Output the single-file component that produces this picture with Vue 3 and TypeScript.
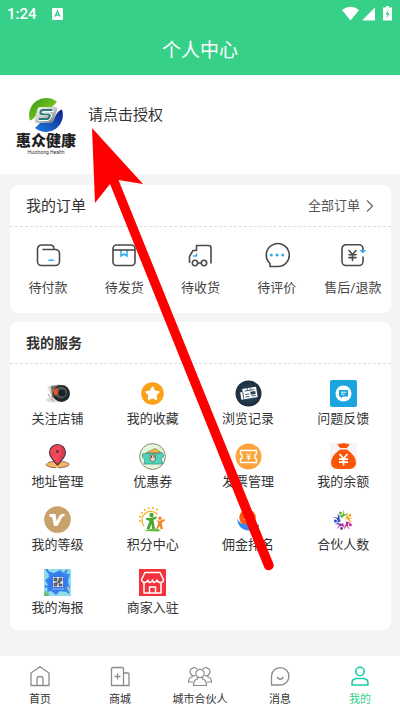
<script setup lang="ts">
interface Entry {
  icon: string
  label: string
}

const orders: Entry[] = [
  { icon: 'wallet', label: '待付款' },
  { icon: 'parcel', label: '待发货' },
  { icon: 'truck', label: '待收货' },
  { icon: 'comment', label: '待评价' },
  { icon: 'refund', label: '售后/退款' },
]

const services: Entry[] = [
  { icon: 'lens', label: '关注店铺' },
  { icon: 'star', label: '我的收藏' },
  { icon: 'news', label: '浏览记录' },
  { icon: 'feedback', label: '问题反馈' },
  { icon: 'pin', label: '地址管理' },
  { icon: 'coupon', label: '优惠券' },
  { icon: 'invoice', label: '发票管理' },
  { icon: 'moneybag', label: '我的余额' },
  { icon: 'level', label: '我的等级' },
  { icon: 'family', label: '积分中心' },
  { icon: 'commission', label: '佣金排名' },
  { icon: 'partners', label: '合伙人数' },
  { icon: 'poster', label: '我的海报' },
  { icon: 'shop', label: '商家入驻' },
]

const tabs: Entry[] = [
  { icon: 'home', label: '首页' },
  { icon: 'mall', label: '商城' },
  { icon: 'group', label: '城市合伙人' },
  { icon: 'message', label: '消息' },
  { icon: 'me', label: '我的' },
]
const activeTab = 'me'
const partnerColors = ['#5cb531', '#f4a81d', '#c9259b', '#8a2fa8', '#2748c8']
const sunRays = [-100, -78, -56, -34, -12, 10, 32]
</script>

<template>
  <div class="page">
    <svg class="sprite" aria-hidden="true">
      <defs>
        <linearGradient id="g-green" x1="0" y1="0" x2="1" y2="1">
          <stop offset="0" stop-color="#2f9a1c" /><stop offset="1" stop-color="#a6d81c" />
        </linearGradient>
        <linearGradient id="g-blue" x1="0" y1="1" x2="1" y2="0">
          <stop offset="0" stop-color="#1d7fe0" /><stop offset="1" stop-color="#12208c" />
        </linearGradient>
        <linearGradient id="g-silver" x1="0" y1="0" x2="1" y2="1">
          <stop offset="0" stop-color="#fff" /><stop offset=".5" stop-color="#c3c8ca" /><stop offset="1" stop-color="#666c70" />
        </linearGradient>
        <radialGradient id="g-navy">
          <stop offset="0" stop-color="#35536a" /><stop offset="1" stop-color="#1b2b3c" />
        </radialGradient>
        <radialGradient id="g-poster">
          <stop offset="0" stop-color="#2b5fe4" /><stop offset="1" stop-color="#3b8af2" />
        </radialGradient>
      </defs>

      <symbol id="logo" viewBox="0 0 36 36">
        <path d="M2 23.500A17 17 0 0 1 29 5L22 12Q12 9 9 16T2 23.500Z" fill="url(#g-green)" />
        <path d="M34 12.500A17 17 0 0 1 7 31L14 24Q24 27 27 20T34 12.500Z" fill="url(#g-blue)" />
        <path d="M12 10H28Q30 10 29 13L26 23Q25 26 21 26H9Q6 26 7 23L9 14Q10 10 12 10Z" fill="url(#g-silver)" />
        <path d="M24 13H15Q13 13 12.500 15T14 17H20Q22 17 21.500 19.500T19 22H11" fill="none" stroke="#2a7a75" stroke-width="2" />
        <path d="M25.500 14.500H16L15 16H21Q24 16 23.500 19T20 23.500H11" fill="none" stroke="#fff" stroke-width="1" />
      </symbol>

      <symbol id="wallet" viewBox="0 0 26 26">
        <g fill="none" stroke="#4a4a4a" stroke-width="1.600" stroke-linecap="round">
          <path d="M8 7.500H20.500A4 4 0 0 1 24.500 11.500V19.500A4 4 0 0 1 20.500 23.500H6.500A4 4 0 0 1 2.500 19.500V7A4 4 0 0 1 6.500 3H15.500Q18.500 3 19 6.500" />
          <path d="M14 18.300H18.500" stroke="#35adf3" />
        </g>
      </symbol>
      <symbol id="parcel" viewBox="0 0 26 26">
        <path d="M10 8V14L13 12L16 14V8" fill="none" stroke="#35adf3" stroke-width="1.600" />
        <rect x="2" y="3" width="22" height="20.500" rx="3.500" fill="none" stroke="#4a4a4a" stroke-width="1.600" />
        <path d="M2 8H24" stroke="#4a4a4a" stroke-width="1.600" />
      </symbol>
      <symbol id="truck" viewBox="0 0 26 26">
        <g fill="none" stroke="#4a4a4a" stroke-width="1.600" stroke-linejoin="round">
          <path d="M2.500 21V14.500L6 8.500H9.500V3.500H21.500Q24 3.500 24 6V21.500M11 21H14" />
          <circle cx="8" cy="21" r="2.700" /><circle cx="17" cy="21" r="2.700" />
          <path d="M6 14H9.500V11.500" stroke="#35adf3" />
        </g>
      </symbol>
      <symbol id="comment" viewBox="0 0 26 26">
        <path d="M13 24.500H6V21.500A11.500 11.500 0 1 1 13 24.500Z" fill="none" stroke="#4a4a4a" stroke-width="1.600" stroke-linejoin="round" />
        <g fill="#2caaf5"><circle cx="7.300" cy="13" r="1.500" /><circle cx="13" cy="13" r="1.500" /><circle cx="18.700" cy="13" r="1.500" /></g>
      </symbol>
      <symbol id="refund" viewBox="0 0 26 26">
        <g fill="none" stroke="#4a4a4a" stroke-width="1.600" stroke-linecap="round">
          <path d="M23 8V6.500A4 4 0 0 0 19 2.700H6A4 4 0 0 0 2 6.700V19.500A4 4 0 0 0 6 23.500H19A4 4 0 0 0 23 19.500V15" />
          <path d="M9 8.500L12.500 12.500L16 8.500M12.500 12.500V18.500M9 12.700H16M9 15.600H16" />
        </g>
        <path d="M19.500 8H26L22.800 11.500Z" fill="#2caaf5" />
      </symbol>

      <symbol id="lens" viewBox="0 0 27 27">
        <ellipse cx="10" cy="20" rx="8" ry="2.500" fill="#ddd" />
        <path d="M2 7L16 4L20 17L6 20Z" fill="#d5d0c9" />
        <path d="M3 7L7 19" stroke="#fff" stroke-width="2" />
        <path d="M7 6L16 5L13 20L8 17Z" fill="#777069" />
        <circle cx="17.500" cy="13.500" r="8.500" fill="#20272b" />
        <circle cx="17" cy="12.500" r="6" fill="#4e565a" />
        <circle cx="18" cy="13" r="3.500" fill="#172226" />
        <path d="M9 10L13.500 7.500L14 14L10.500 16Z" fill="#e2582b" />
        <path d="M10 21Q6 19 4 14" fill="none" stroke="#a69d92" />
      </symbol>
      <symbol id="star" viewBox="0 0 27 27">
        <circle cx="13.500" cy="13.500" r="11.300" fill="#f9a11b" />
        <path d="M13.500 7L15.700 11L20 11.800L17 15L17.500 19.500L13.500 17.600L9.500 19.500L10 15L7 11.800L11.300 11Z" fill="#fff" stroke="#fff" stroke-width="1.300" stroke-linejoin="round" />
      </symbol>
      <symbol id="news" viewBox="0 0 27 27">
        <circle cx="13.500" cy="13.500" r="13" fill="url(#g-navy)" />
        <g transform="rotate(-9 13.500 13.500)">
          <path d="M8 8H22V18.500H5.500V11H8Z" fill="#fff" />
          <path d="M8 11V18M10 10.500H20M10 16.500H14M10 14H14M16 16.500H20.500" stroke="#294052" stroke-width=".8" />
          <rect x="15.500" y="12" width="5" height="3" fill="#294052" />
          <path d="M13 8V10M16 8V10" stroke="#294052" stroke-width=".7" />
        </g>
      </symbol>
      <symbol id="feedback" viewBox="0 0 27 27">
        <rect width="27" height="27" rx="2" fill="#1ba5df" />
        <circle cx="13.500" cy="13.500" r="8" fill="#fff" />
        <path d="M9 10H18V16.500H13L10.800 18.500V16.500H9Z" fill="#1ba5df" />
        <path d="M11 12.200H16M11 14.200H14.500" stroke="#fff" stroke-width=".9" />
      </symbol>
      <symbol id="pin" viewBox="0 0 27 27">
        <ellipse cx="13.500" cy="21.500" rx="11.500" ry="3.300" fill="#f9b45e" stroke="#564247" stroke-width=".7" stroke-dasharray="12 2" />
        <path d="M13.500 22Q5.500 14 5.500 9.500A8 8 0 0 1 21.500 9.500Q21.500 14 13.500 22Z" fill="#f1475a" stroke="#423542" stroke-width="1.200" />
        <path d="M17 3.500A7 7 0 0 1 20.500 10Q20 14 14 20Q18 12 17 3.500Z" fill="#d93a50" />
        <circle cx="13.500" cy="8.500" r="1.500" fill="#493743" />
      </symbol>
      <symbol id="coupon" viewBox="0 0 27 27">
        <circle cx="13.500" cy="13.500" r="12.900" fill="#e2f7dc" stroke="#8c8870" stroke-width="1" />
        <path d="M7 10L16 5.500L22 9.500Z" fill="#f1bb45" stroke="#8b6e3e" stroke-width=".7" />
        <path d="M5.500 10.500H21.500L23 9.500L25 13L22 15.500L24 21H5L6 17L3.500 14V11Z" fill="#4cd5bf" stroke="#4b8f7c" stroke-width=".8" />
        <path d="M11 12H16.500V17L13.800 19L11 17Z" fill="#e7d7ba" stroke="#665b4c" stroke-width=".8" />
        <path d="M12.500 13V15M15 13V15" stroke="#564f48" />
      </symbol>
      <symbol id="invoice" viewBox="0 0 27 27">
        <circle cx="13.500" cy="13.500" r="13" fill="#fba53c" />
        <path d="M5.500 7.500H21.500V11A2.600 2.600 0 0 0 21.500 16V19.500H5.500V16A2.600 2.600 0 0 0 5.500 11Z" fill="none" stroke="#fff" stroke-width="1.400" stroke-linejoin="round" />
        <path d="M11.500 10.500L13.500 13L15.500 10.500M13.500 13V17M11.500 13.300H15.500M11.500 15.200H15.500" fill="none" stroke="#fff" />
      </symbol>
      <symbol id="moneybag" viewBox="0 0 27 27">
        <rect width="27" height="27" fill="#f7f4f7" />
        <path d="M8 1.500Q13.500 0 19 1.500L17 4.500H10Z" fill="#fb5508" stroke="#fb5508" stroke-linejoin="round" />
        <path d="M10 6.500H17Q26 13 26 19.500Q26 26 19 26H8Q1 26 1 19.500Q1 13 10 6.500Z" fill="#fb5508" />
        <path d="M9.500 11L13.500 15.500L17.500 11M13.500 15.500V22.500M9 16.200H18M9 19.200H18" fill="none" stroke="#fff" stroke-width="1.700" />
      </symbol>
      <symbol id="level" viewBox="0 0 27 27">
        <circle cx="13.500" cy="13.500" r="13.300" fill="#c8a16b" />
        <path d="M5.500 8H11.500L12.500 15L15 10.500Q16 8 18 8H21L20 10.500H18.500L13.500 20H10L8 11H5.500Z" fill="#fff" />
      </symbol>
      <symbol id="family" viewBox="0 0 27 27">
        <path d="M5 20A8.500 8.500 0 1 1 18.500 8.500" fill="none" stroke="#f6b02d" stroke-width="1.300" />
        <path v-for="a in sunRays" :key="a" d="M12 3V.8" :transform="`rotate(${a} 12 13)`" stroke="#f6b02d" stroke-width="1.500" />
        <circle cx="12.500" cy="9" r="2.200" fill="#47a72f" />
        <path d="M7 12L11 12L17.500 10.500L18 12L14.500 14L16 23H13.300L12.500 18L10.500 23H7.500L10.500 15L7 13.500Z" fill="#47a72f" />
        <circle cx="21" cy="12.300" r="1.700" fill="#f28424" />
        <path d="M17.500 13.500L20.500 15L25.500 13L26 14.500L22.500 17L24 23H21.500L20.800 20L18.500 23H17L19.500 17Z" fill="#f28424" />
        <path d="M5 25Q13 21 22 24L19 25.500Z" fill="#61bd36" />
      </symbol>
      <symbol id="commission" viewBox="0 0 27 27">
        <circle cx="12.500" cy="11.500" r="8.300" fill="#fb5c12" />
        <path d="M9.500 7L12.500 11L15.500 7M12.500 11V16M9.500 11H15.500M9.500 13.500H15.500" fill="none" stroke="#fff" stroke-width="1.200" />
        <path d="M2 12.500Q5 18 10 18L16 20L24 18.500V20.500Q19 25 12 24.500Q3 23 2 12.500Z" fill="#3489f5" />
      </symbol>
      <symbol id="partners" viewBox="0 0 27 27">
        <g v-for="(color, i) in partnerColors" :key="color" :transform="`rotate(${i * 72} 13.500 14.500)`" :fill="color">
          <circle cx="10.500" cy="7" r="1.500" />
          <path d="M13.500 3.500Q15.500 7.500 12 12.500Q11.500 10.500 8 9Q10.500 9.500 12 9Q14 7 13.500 3.500Z" />
          <path d="M13 8.500Q15.500 8.500 18.500 6.500Q16.500 10 12.500 10.800Z" />
        </g>
      </symbol>
      <symbol id="poster" viewBox="0 0 27 27">
        <rect width="27" height="27" fill="#91dcec" />
        <path d="M4 2L10 4L16 1L20 4L26 5L24 12L26 19L21 23L16 22L12 26L7 22L3 23L4 16L1 11L5 8Z" fill="url(#g-poster)" />
        <path d="M2 0L5 4M23 1L21 4M1 17L4 18M22 21L25 24" stroke="#3680e5" stroke-width="2" />
        <path d="M0 27L1 21L3 25L4 22L5 27Z" fill="#63b96a" /><circle cx="24" cy="19" r="1" fill="#f5dc45" />
        <rect x="9" y="8" width="10" height="10" fill="#eef3fa" />
        <path d="M10 9H13V12H10ZM15 9H18V12H15ZM10 14H13V17H10ZM14 12H16V14H14ZM15 15H18V17H15ZM13 13V15" fill="#777" stroke="#3c4352" stroke-width=".7" />
        <path d="M8 20H20" stroke="#a9cdfb" stroke-width=".8" />
      </symbol>
      <symbol id="shop" viewBox="0 0 27 27">
        <rect width="27" height="27" fill="#f2323d" />
        <g fill="none" stroke="#fff" stroke-width="1.500" stroke-linejoin="round">
          <path d="M6 3.500H21L24.500 10.500Q24.500 13.500 21.500 13.500T18 11Q17 13.500 15.500 13.500T13.500 11Q12.500 13.500 11 13.500T9 11Q8 13.500 5.500 13.500T2.500 10.500Z" />
          <path d="M5 14V24H22V14M10.500 24V18H16.500V24" />
        </g>
      </symbol>

      <symbol id="home" viewBox="0 0 24 24">
        <path d="M3 9L12 2.800L21 9V21.500H3ZM9 21.500V15Q9 12.500 12 12.500T15 15V21.500" fill="none" stroke="currentColor" stroke-width="1.300" stroke-linejoin="round" />
      </symbol>
      <symbol id="mall" viewBox="0 0 24 24">
        <path d="M5 3.500H14Q15.500 3.500 15.500 5V21.500H3.500V5Q3.500 3.500 5 3.500ZM15.500 9H20Q21 9 21 10V21.500H15.500M9.500 9.500V15.500M6.500 12.500H12.500" fill="none" stroke="currentColor" stroke-width="1.300" />
      </symbol>
      <symbol id="group" viewBox="0 0 24 24">
        <g fill="none" stroke="currentColor" stroke-width="1.200" stroke-linejoin="round">
          <path d="M7.500 11.500A4 4 0 1 1 9 5M16.500 11.500A4 4 0 1 0 15 5M5 11L4 13Q.5 14 .5 18H5M19 11L20 13Q23.500 14 23.500 18H19" />
          <circle cx="12" cy="9.500" r="4.200" />
          <path d="M9.500 13V15Q5.500 16 5.500 21.500H18.500Q18.500 16 14.500 15V13" />
        </g>
      </symbol>
      <symbol id="message" viewBox="0 0 24 24">
        <path d="M3.500 21V12.500A8.700 8.700 0 1 1 12.200 21ZM9 13Q12.200 17.500 15.500 13" fill="none" stroke="currentColor" stroke-width="1.300" stroke-linejoin="round" />
      </symbol>
      <symbol id="me" viewBox="0 0 24 24">
        <g fill="none" stroke="#1dcda6" stroke-width="1.600" stroke-linejoin="round">
          <circle cx="12" cy="7.500" r="4.200" />
          <path d="M4 21V19Q4 14.500 9 14.500H15Q20 14.500 20 19V21Z" />
        </g>
      </symbol>
    </svg>

    <header class="top">
      <div class="status">
        <span class="clock">1:24</span>
        <svg class="badge" viewBox="0 0 11 12">
          <rect width="11" height="12" rx="1" fill="#fff" />
          <path d="M3 8.500L5.500 3L8 8.500M4 7H7" fill="none" stroke="#37d089" stroke-width="1.300" />
        </svg>
        <svg class="signals" viewBox="0 0 51 16">
          <path d="M0 4Q8.500 -2.500 17 4L8.500 14.500Z" fill="#fff" />
          <path d="M33 1.500V14.500H20Z" fill="#fff" />
          <path d="M44 1.500V0H47V1.500H50V14.500H41V1.500Z" fill="#fff" />
          <path d="M46.500 3.500L43.500 8.500H45.500L44.500 12.500L47.800 7.300H45.800Z" fill="#37d089" />
        </svg>
      </div>
      <h1 class="title">个人中心</h1>
    </header>

    <section class="profile">
      <div class="brand">
        <svg class="brand-mark"><use href="#logo" /></svg>
        <span class="brand-name">惠众健康</span>
        <span class="brand-sub">Huizhong Health</span>
      </div>
      <button class="authorize" type="button">请点击授权</button>
    </section>

    <main class="content">
      <section class="card">
        <div class="card-head">
          <h2 class="orders-title">我的订单</h2>
          <a class="all" href="#orders">全部订单
            <svg class="chevron" viewBox="0 0 8 14"><path d="M1 1.500L6.500 7L1 12.500" fill="none" stroke="#666" stroke-width="1.200" /></svg>
          </a>
        </div>
        <nav class="orders">
          <a v-for="item in orders" :key="item.icon" class="order" href="#orders">
            <svg class="order-icon"><use :href="`#${item.icon}`" /></svg>
            <span>{{ item.label }}</span>
          </a>
        </nav>
      </section>

      <section class="card">
        <div class="card-head">
          <h2 class="services-title">我的服务</h2>
        </div>
        <nav class="services">
          <a v-for="item in services" :key="item.icon" class="service" href="#services">
            <svg class="service-icon"><use :href="`#${item.icon}`" /></svg>
            <span>{{ item.label }}</span>
          </a>
        </nav>
      </section>
    </main>

    <nav class="tabs">
      <a v-for="tab in tabs" :key="tab.icon" class="tab" :class="{ active: tab.icon === activeTab }" href="#tab">
        <svg class="tab-icon"><use :href="`#${tab.icon}`" /></svg>
        <span>{{ tab.label }}</span>
      </a>
    </nav>

    <svg class="pointer" viewBox="0 0 184 446" aria-hidden="true">
      <path d="M0 0L51 56L26.500 52L181.500 436A5 5 0 0 1 172.500 440L18 56L3 75Z" fill="#f00" />
    </svg>
  </div>
</template>

<style>
body {
  background: #f4f4f4;
}
</style>

<style scoped>
.page {
  position: relative;
  display: flex;
  flex-direction: column;
  min-height: 100vh;
  background: #f4f4f4;
  color: #333;
  font-family: Roboto, "Noto Sans CJK SC", sans-serif;
  font-size: 13px;
  line-height: 20px;
}
.sprite {
  position: absolute;
  width: 0;
  height: 0;
}
a {
  color: inherit;
  text-decoration: none;
}
h1,
h2 {
  margin: 0;
  font-weight: 400;
}
.top {
  background: #37d089;
  color: #fff;
  padding-bottom: 10px;
}
.status {
  display: flex;
  align-items: center;
  height: 28px;
  padding: 0 7px;
}
.clock {
  font-size: 15px;
  font-weight: 500;
}
.badge {
  width: 11px;
  height: 12px;
  margin-left: 15px;
}
.signals {
  width: 51px;
  height: 16px;
  margin-left: auto;
}
.title {
  margin-top: 9px;
  font-size: 19px;
  line-height: 28px;
  text-align: center;
}
.profile {
  display: flex;
  align-items: flex-start;
  gap: 12px;
  padding: 22px 16px 18px;
  background: #fff;
}
.brand {
  display: flex;
  flex-direction: column;
  align-items: center;
  width: 60px;
}
.brand-mark {
  width: 36px;
  height: 36px;
}
.brand-name {
  color: #222;
  font-size: 15px;
  font-weight: 900;
  line-height: 16px;
}
.brand-sub {
  font-size: 5px;
  line-height: 7px;
}
.authorize {
  margin: 8px 0;
  padding: 0;
  border: 0;
  background: none;
  color: #333;
  font: inherit;
  font-size: 15px;
}
.content {
  display: flex;
  flex-direction: column;
  gap: 9px;
  padding: 11px 9px 26px 10px;
}
.card {
  border-radius: 8px;
  background: #fff;
}
.card-head {
  display: flex;
  align-items: center;
  justify-content: space-between;
  height: 41px;
  padding: 0 16px;
  border-bottom: 1px dashed #ddd;
}
.orders-title {
  font-size: 15px;
}
.services-title {
  font-size: 14px;
  font-weight: 700;
}
.all {
  display: flex;
  align-items: center;
  gap: 6px;
  padding-right: 1px;
  color: #555;
}
.chevron {
  width: 8px;
  height: 14px;
}
.orders {
  display: grid;
  grid-template-columns: repeat(5, 1fr);
  padding: 15px 0;
}
.order {
  display: flex;
  flex-direction: column;
  align-items: center;
  gap: 10px;
  color: #444;
  white-space: nowrap;
}
.order-icon {
  width: 26px;
  height: 26px;
}
.services {
  display: grid;
  grid-template-columns: repeat(4, 1fr);
  row-gap: 14px;
  padding: 16px 0 12px;
}
.service {
  display: flex;
  flex-direction: column;
  align-items: center;
  gap: 2px;
}
.service-icon {
  width: 27px;
  height: 27px;
}
.tabs {
  display: grid;
  grid-template-columns: repeat(5, 1fr);
  margin-top: auto;
  padding: 8px 0 4px;
  background: #fff;
}
.tab {
  display: flex;
  flex-direction: column;
  align-items: center;
  gap: 4px;
  font-size: 11px;
  line-height: 16px;
}
.tab-icon {
  width: 24px;
  height: 24px;
  color: #8c8c8c;
}
.active {
  color: #37d089;
}
.pointer {
  position: absolute;
  top: 128px;
  left: 92px;
  width: 184px;
  height: 446px;
  pointer-events: none;
}
</style>
